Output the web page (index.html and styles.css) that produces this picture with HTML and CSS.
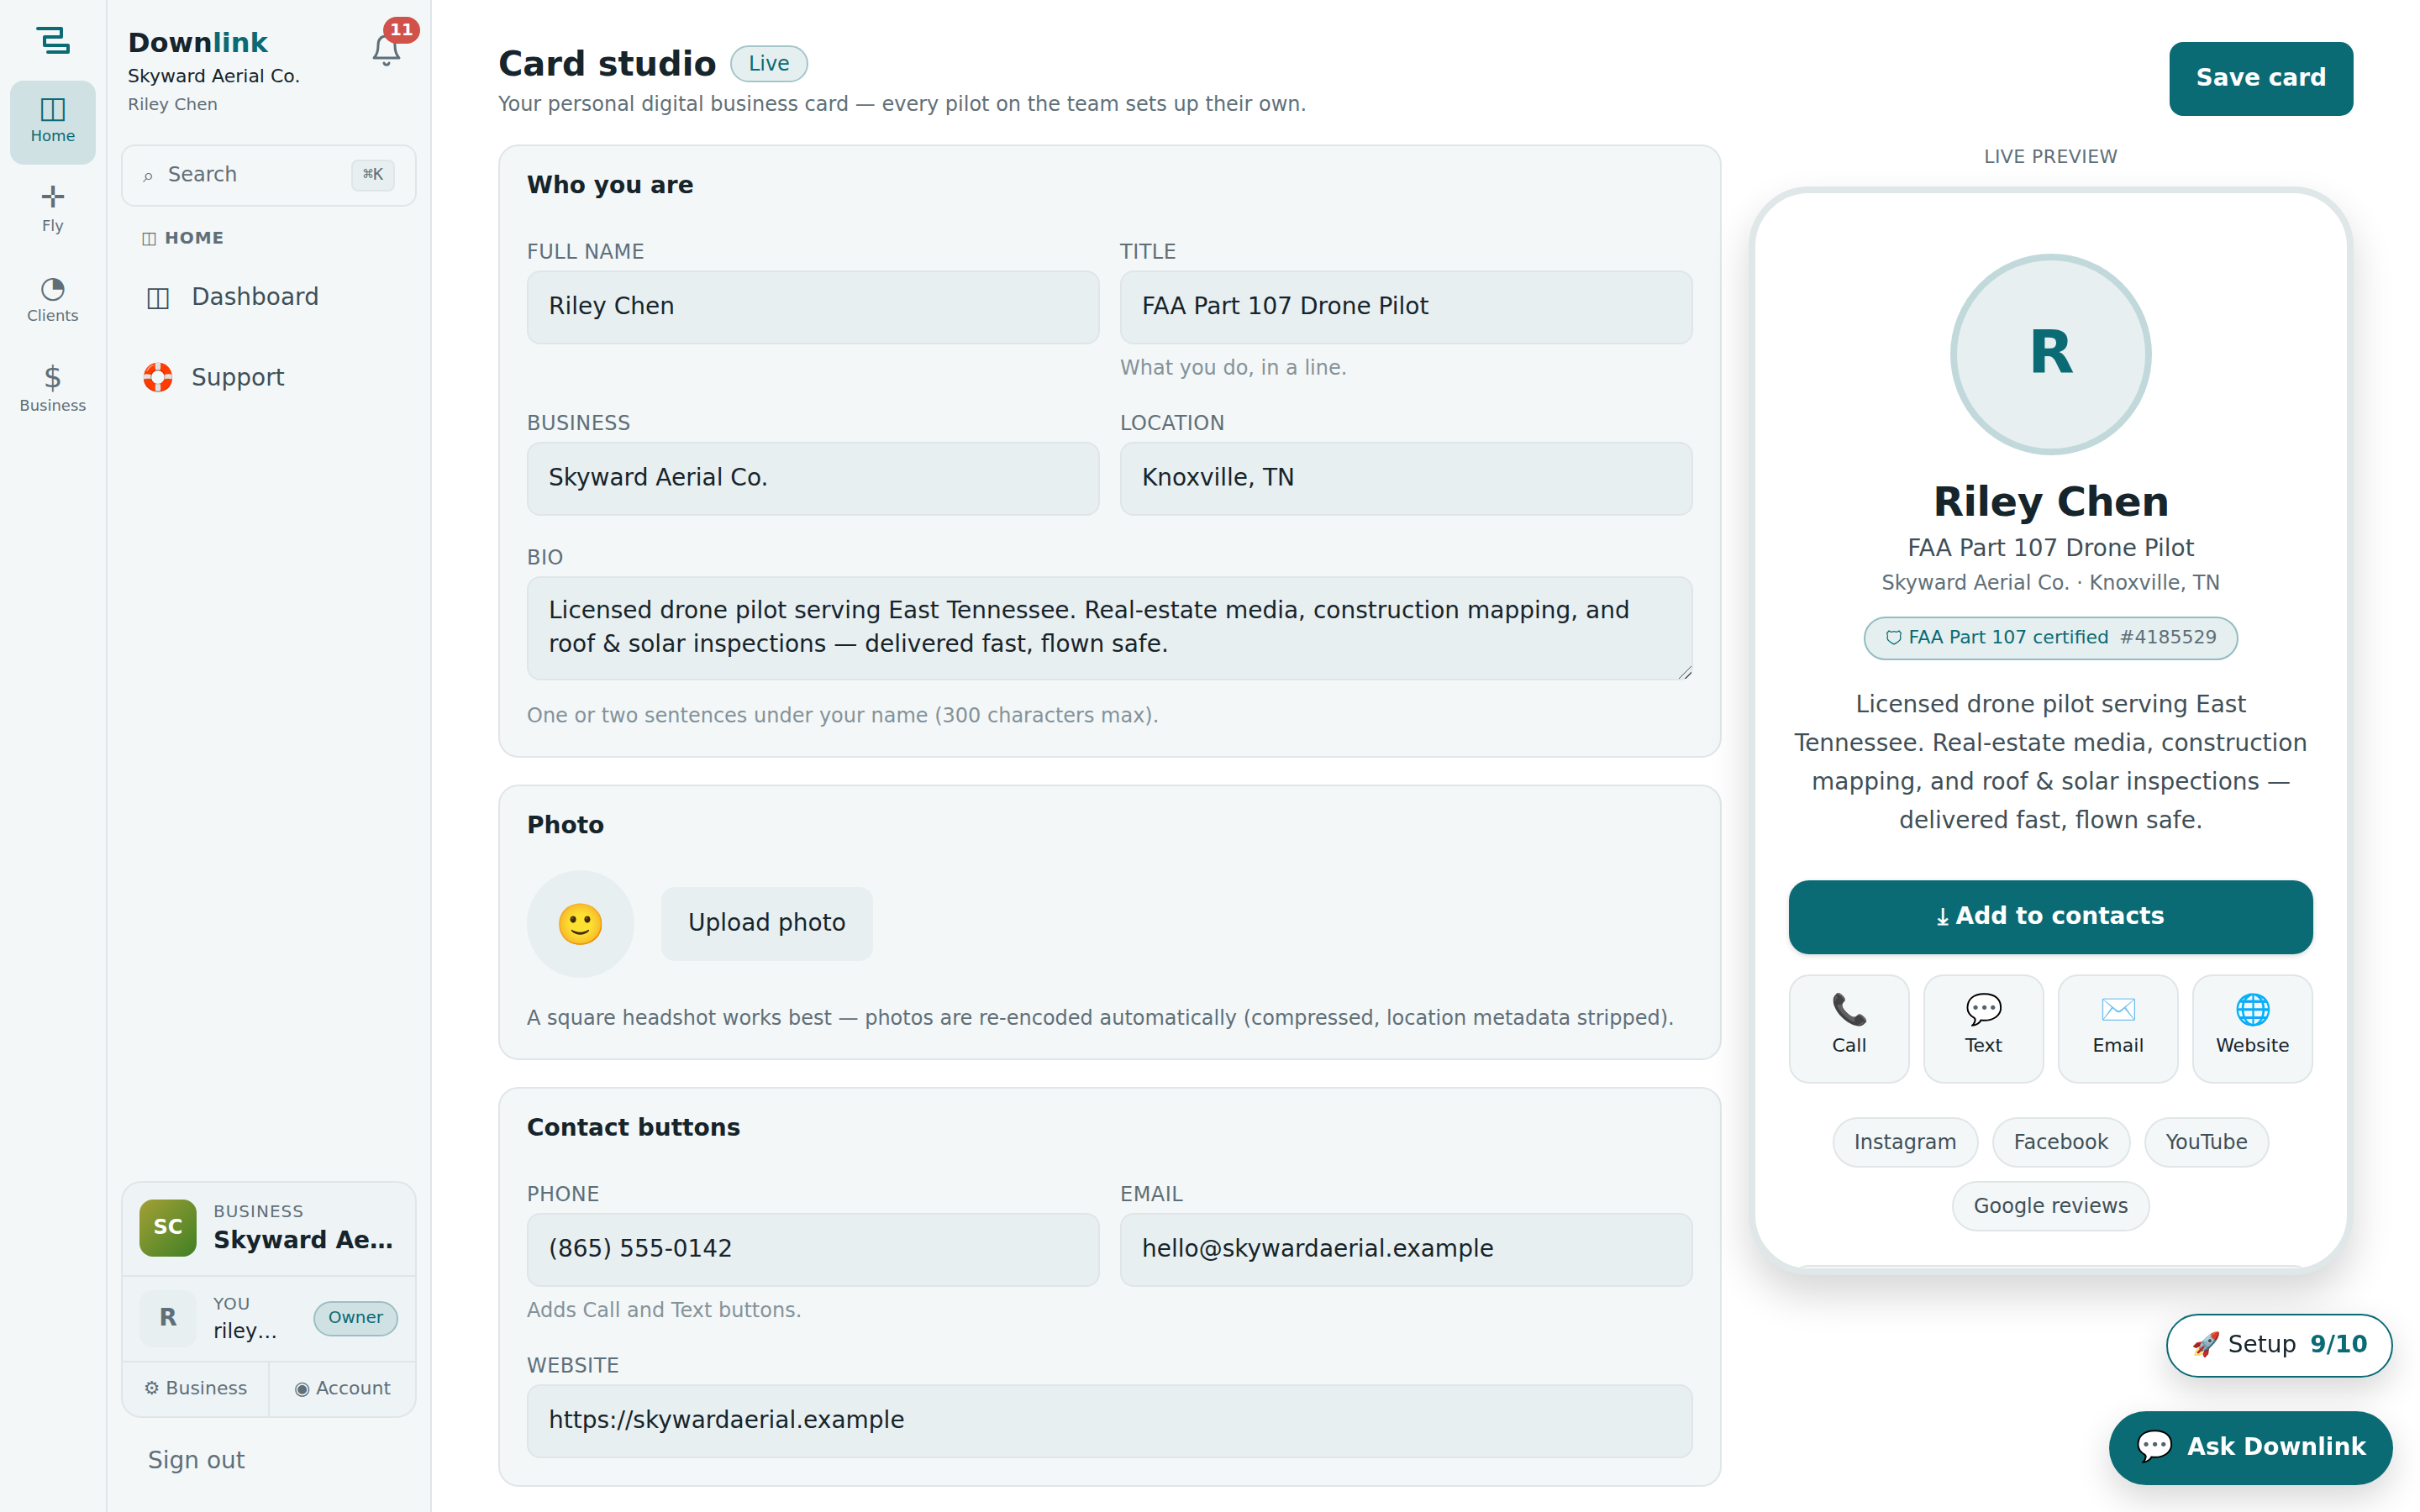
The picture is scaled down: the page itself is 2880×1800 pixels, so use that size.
FILE: index.html
```html
<!DOCTYPE html>
<html lang="en">
  <head>
    <meta charset="utf-8" />
    <meta name="viewport" content="width=device-width, initial-scale=1.0" />
    <title>Card studio - Downlink</title>
    <link rel="stylesheet" href="styles.css">
  </head>
  <body>
    <div class="app">
      <nav class="rail" aria-label="Sections">
        <a class="rail-logo" href="#" aria-label="Downlink">
          <svg width="40" height="32" viewBox="0 0 40 32" fill="none" stroke="currentColor" stroke-width="4" stroke-linecap="round" stroke-linejoin="round">
            <path d="M2 2h28v10H10v10h28v8H14" />
          </svg>
        </a>
        <a class="rail-item active" href="#"><span class="rail-icon">◫</span><span>Home</span></a>
        <a class="rail-item" href="#"><span class="rail-icon">✛</span><span>Fly</span></a>
        <a class="rail-item" href="#"><span class="rail-icon">◔</span><span>Clients</span></a>
        <a class="rail-item" href="#"><span class="rail-icon">$</span><span>Business</span></a>
      </nav>

      <aside class="sidebar">
        <div class="side-head">
          <div>
            <div class="brand">Down<span>link</span></div>
            <div class="org">Skyward Aerial Co.</div>
            <div class="user">Riley Chen</div>
          </div>
          <button class="bell" type="button" aria-label="Notifications">
            <svg width="44" height="44" viewBox="0 0 44 44" fill="none" stroke="currentColor" stroke-width="3" stroke-linecap="round" stroke-linejoin="round">
              <path d="M22 5c-7 0-10 4-10 11 0 8-2 12-5 15h30c-3-3-5-7-5-15 0-7-3-11-10-11z" />
              <path d="M19 37c1 3 5 3 6 0" />
            </svg>
            <span class="bell-count">11</span>
          </button>
        </div>

        <button class="search" type="button">
          <span class="search-icon">⌕</span>
          <span class="search-text">Search</span>
          <kbd>⌘K</kbd>
        </button>

        <div class="nav-title"><span class="nav-title-icon">◫</span> HOME</div>
        <nav class="side-nav">
          <a href="#"><span class="nav-icon">◫</span>Dashboard</a>
          <a href="#"><span class="nav-icon">🛟</span>Support</a>
        </nav>

        <div class="account">
          <div class="account-row">
            <div class="tile tile-org">SC</div>
            <div class="account-text">
              <div class="caps">BUSINESS</div>
              <div class="account-org">Skyward Aerial Co.</div>
            </div>
          </div>
          <div class="account-row account-you">
            <div class="tile">R</div>
            <div class="account-text">
              <div class="caps">YOU</div>
              <div class="account-user">riley@sky</div>
            </div>
            <span class="role">Owner</span>
          </div>
          <div class="account-links">
            <a href="#">⚙ Business</a>
            <a href="#">◉ Account</a>
          </div>
        </div>
        <a class="sign-out" href="#">Sign out</a>
      </aside>

      <main class="main">
        <header class="page-head">
          <div>
            <div class="title-row">
              <h1>Card studio</h1>
              <span class="live">Live</span>
            </div>
            <p class="sub">Your personal digital business card — every pilot on the team sets up their own.</p>
          </div>
          <button class="btn btn-primary" type="submit" form="card-form">Save card</button>
        </header>

        <div class="studio">
          <form class="cards" id="card-form">
            <section class="card">
              <h2>Who you are</h2>
              <div class="fields">
                <div class="field">
                  <label for="full-name">FULL NAME</label>
                  <input id="full-name" type="text" value="Riley Chen" />
                </div>
                <div class="field">
                  <label for="title">TITLE</label>
                  <input id="title" type="text" value="FAA Part 107 Drone Pilot" />
                  <p class="hint">What you do, in a line.</p>
                </div>
                <div class="field">
                  <label for="business">BUSINESS</label>
                  <input id="business" type="text" value="Skyward Aerial Co." />
                </div>
                <div class="field">
                  <label for="location">LOCATION</label>
                  <input id="location" type="text" value="Knoxville, TN" />
                </div>
                <div class="field wide">
                  <label for="bio">BIO</label>
                  <textarea id="bio" rows="2" maxlength="300">Licensed drone pilot serving East Tennessee. Real-estate media, construction mapping, and roof &amp; solar inspections — delivered fast, flown safe.</textarea>
                  <p class="hint">One or two sentences under your name (300 characters max).</p>
                </div>
              </div>
            </section>

            <section class="card">
              <h2>Photo</h2>
              <div class="photo-row">
                <div class="photo">🙂</div>
                <button class="btn" type="button">Upload photo</button>
              </div>
              <p class="note">A square headshot works best — photos are re-encoded automatically (compressed, location metadata stripped).</p>
            </section>

            <section class="card">
              <h2>Contact buttons</h2>
              <div class="fields">
                <div class="field">
                  <label for="phone">PHONE</label>
                  <input id="phone" type="tel" value="(865) 555-0142" />
                  <p class="hint">Adds Call and Text buttons.</p>
                </div>
                <div class="field">
                  <label for="email">EMAIL</label>
                  <input id="email" type="email" value="hello@skywardaerial.example" />
                </div>
                <div class="field wide">
                  <label for="website">WEBSITE</label>
                  <input id="website" type="url" value="https://skywardaerial.example" />
                </div>
              </div>
            </section>
          </form>

          <section class="preview">
            <div class="preview-label">LIVE PREVIEW</div>
            <div class="phone">
              <div class="avatar">R</div>
              <h3>Riley Chen</h3>
              <p class="p-title">FAA Part 107 Drone Pilot</p>
              <p class="p-org">Skyward Aerial Co. · Knoxville, TN</p>
              <div class="cert">
                <svg width="20" height="20" viewBox="0 0 20 20" fill="none" stroke="currentColor" stroke-width="1.2" stroke-linejoin="round">
                  <path d="M4 2c2 2 4 1.500 6 .5 2 1 4 1.500 6-.5l2.500 3c-1.500 2-1 4-.5 6-1 4-5 5-8 7-3-2-7-3-8-7 .5-2 1-4-.5-6z" />
                </svg>
                FAA Part 107 certified
                <span>#4185529</span>
              </div>
              <p class="p-bio">Licensed drone pilot serving East Tennessee. Real-estate media, construction mapping, and roof &amp; solar inspections — delivered fast, flown safe.</p>
              <button class="add" type="button">⤓ Add to contacts</button>
              <div class="actions">
                <a href="#"><span>📞</span>Call</a>
                <a href="#"><span>💬</span>Text</a>
                <a href="#"><span>✉️</span>Email</a>
                <a href="#"><span>🌐</span>Website</a>
              </div>
              <div class="chips">
                <a href="#">Instagram</a>
                <a href="#">Facebook</a>
                <a href="#">YouTube</a>
                <a href="#">Google reviews</a>
              </div>
              <div class="lead"></div>
            </div>
          </section>
        </div>
      </main>
    </div>

    <div class="floating">
      <button class="setup" type="button"><span>🚀 Setup</span> <b>9/10</b></button>
      <button class="ask" type="button"><span class="ask-icon">💬</span> Ask Downlink</button>
    </div>
  </body>
</html>
```
FILE: styles.css
```css
:root {
  --teal: #0b6b75;
  --ink: #16242b;
  --body: #3f4f57;
  --muted: #5f6f78;
  --faint: #849299;
  --line: #e0e6e8;
  --panel: #f3f7f8;
  --field: #e8eff1;
}

* { box-sizing: border-box; }

body {
  margin: 0;
  background: #fff;
  color: var(--ink);
  font-family: "DejaVu Sans", sans-serif;
  font-size: 28px;
}

h1, h2, h3, p { margin: 0; }
a { color: inherit; text-decoration: none; }
button, input, textarea { font: inherit; color: inherit; }
button { border: 0; background: none; padding: 0; cursor: pointer; }

.app {
  display: flex;
  align-items: flex-start;
  min-height: 100vh;
}

/* icon rail */
.rail {
  position: sticky;
  top: 0;
  flex: none;
  display: flex;
  flex-direction: column;
  gap: 7px;
  width: 128px;
  height: 100vh;
  padding: 32px 12px;
  background: var(--panel);
  border-right: 2px solid var(--line);
}

.rail-logo {
  display: flex;
  justify-content: center;
  height: 57px;
  color: var(--teal);
}

.rail-item {
  display: flex;
  flex-direction: column;
  align-items: center;
  height: 100px;
  padding-top: 12px;
  border-radius: 16px;
  color: var(--muted);
  font-size: 18px;
  line-height: 24px;
}

.rail-item.active { background: #d0e1e4; color: var(--teal); }

.rail-icon {
  height: 42px;
  font-size: 36px;
  line-height: 40px;
}

/* sidebar */
.sidebar {
  position: sticky;
  top: 0;
  flex: none;
  display: flex;
  flex-direction: column;
  width: 386px;
  height: 100vh;
  padding: 30px 16px 16px;
  background: var(--panel);
  border-right: 2px solid var(--line);
}

.side-head {
  display: flex;
  justify-content: space-between;
  align-items: flex-start;
  padding: 0 14px 0 8px;
}

.brand { font-size: 32px; font-weight: bold; line-height: 42px; }
.brand span { color: var(--teal); }
.org { font-size: 22px; line-height: 38px; }
.user { font-size: 20px; line-height: 28px; color: var(--muted); }

.bell {
  position: relative;
  width: 44px;
  height: 52px;
  padding-top: 8px;
  color: var(--muted);
}

.bell svg { display: block; }

.bell-count {
  position: absolute;
  top: -10px;
  right: -18px;
  min-width: 44px;
  height: 32px;
  border-radius: 16px;
  background: #d0524a;
  color: #fff;
  font-size: 20px;
  font-weight: bold;
  line-height: 30px;
  text-align: center;
}

.search {
  display: flex;
  align-items: center;
  height: 74px;
  margin-top: 34px;
  padding: 0 24px;
  border: 2px solid var(--line);
  border-radius: 16px;
  color: var(--muted);
  font-size: 24px;
}

.search-icon { width: 30px; text-align: left; }
.search-text { flex: 1; padding-bottom: 2px; text-align: left; }

kbd {
  height: 38px;
  padding: 0 12px;
  border: 2px solid var(--line);
  border-radius: 8px;
  background: var(--field);
  font-family: "DejaVu Sans Mono", monospace;
  font-size: 20px;
  line-height: 30px;
}

.nav-title {
  display: flex;
  gap: 8px;
  margin: 21px 0 10px;
  padding-left: 24px;
  color: var(--muted);
  font-size: 20px;
  font-weight: bold;
  line-height: 32px;
  letter-spacing: 1px;
}

.nav-title-icon { font-weight: normal; }

.side-nav { display: flex; flex-direction: column; gap: 8px; }

.side-nav a {
  display: flex;
  align-items: center;
  gap: 20px;
  height: 88px;
  padding-left: 24px;
  color: var(--body);
}

.nav-icon {
  display: flex;
  justify-content: center;
  width: 40px;
  font-size: 32px;
}

.account {
  margin-top: auto;
  border: 2px solid var(--line);
  border-radius: 24px;
  background: #eef4f6;
}

.account-row {
  display: flex;
  align-items: center;
  gap: 20px;
  padding: 19px 20px 21px;
  border-bottom: 2px solid var(--line);
}

.account-you { padding: 16px 20px; }

.tile {
  flex: none;
  width: 68px;
  height: 68px;
  border-radius: 16px;
  background: var(--field);
  color: var(--muted);
  font-weight: bold;
  line-height: 66px;
  text-align: center;
}

.tile-org {
  background: linear-gradient(135deg, #a3a035, #3f8025);
  color: #fff;
  font-size: 24px;
}

.account-text { flex: 1; min-width: 0; }
.caps { color: var(--muted); font-size: 20px; line-height: 30px; letter-spacing: 1px; }

.account-org, .account-user {
  overflow: hidden;
  text-overflow: ellipsis;
  white-space: nowrap;
}

.account-org { font-weight: bold; line-height: 40px; }
.account-user { font-size: 24px; line-height: 36px; }

.role {
  height: 42px;
  padding: 0 16px;
  border: 2px solid #9cbfc3;
  border-radius: 21px;
  background: #d0e1e4;
  color: var(--teal);
  font-size: 20px;
  line-height: 35px;
}

.account-links { display: flex; height: 64px; }

.account-links a {
  flex: 1;
  color: var(--muted);
  font-size: 22px;
  line-height: 62px;
  text-align: center;
}

.account-links a + a { border-left: 2px solid var(--line); }

.sign-out {
  height: 88px;
  margin-top: 8px;
  padding-left: 32px;
  color: var(--muted);
  line-height: 86px;
}

/* page */
.main {
  flex: 1;
  min-width: 0;
  padding: 50px 79px 30px;
}

.page-head {
  display: flex;
  justify-content: space-between;
  align-items: flex-start;
  margin-bottom: 32px;
}

.title-row {
  display: flex;
  align-items: center;
  gap: 16px;
  padding-top: 2px;
}

h1 { font-size: 40px; line-height: 48px; }

.live {
  height: 44px;
  padding: 0 20px;
  border: 2px solid #a3c6c9;
  border-radius: 22px;
  background: #e5eff0;
  color: var(--teal);
  font-size: 24px;
  line-height: 40px;
}

.sub { margin-top: 8px; color: var(--muted); font-size: 24px; line-height: 32px; }

.btn {
  height: 88px;
  padding: 0 32px 3px;
  border-radius: 16px;
  background: var(--field);
}

.btn-primary { background: var(--teal); color: #fff; font-weight: bold; }

.studio {
  display: grid;
  grid-template-columns: minmax(0, 1fr) 720px;
  gap: 32px;
  align-items: start;
}

.cards { display: flex; flex-direction: column; gap: 32px; }

.card {
  padding: 32px;
  border: 2px solid var(--line);
  border-radius: 24px;
  background: var(--panel);
}

h2 { font-size: 28px; line-height: 30px; }

.fields {
  display: grid;
  grid-template-columns: 1fr 1fr;
  gap: 32px 24px;
  margin-top: 46px;
}

.wide { grid-column: 1 / -1; }

.field label {
  display: block;
  margin-bottom: 4px;
  color: var(--muted);
  font-size: 24px;
  line-height: 36px;
  letter-spacing: 0.02em;
}

.field input, .field textarea {
  display: block;
  width: 100%;
  height: 88px;
  padding: 0 24px 4px;
  border: 2px solid var(--line);
  border-radius: 16px;
  background: var(--field);
}

.field textarea {
  height: 124px;
  margin-bottom: 26px;
  padding: 19px 24px;
  line-height: 40px;
  resize: vertical;
}

/* two-stroke grip */
.field textarea::-webkit-resizer {
  background: linear-gradient(135deg, transparent 47%, #555 47% 52%, transparent 52% 72%, #555 72% 77%, transparent 77%);
}

.hint { margin-top: 12px; color: var(--faint); font-size: 24px; line-height: 32px; }

.photo-row {
  display: flex;
  align-items: center;
  gap: 32px;
  margin: 38px 0 32px;
}

.photo {
  width: 128px;
  height: 128px;
  border-radius: 50%;
  background: var(--field);
  font-size: 48px;
  line-height: 128px;
  text-align: center;
}

.note { color: var(--muted); font-size: 24px; line-height: 32px; }

/* live preview */
.preview-label {
  margin-bottom: 20px;
  color: var(--muted);
  font-size: 22px;
  line-height: 30px;
  letter-spacing: 0.02em;
  text-align: center;
}

.phone {
  display: flex;
  flex-direction: column;
  align-items: center;
  height: 72vh;
  padding: 72px 40px 0;
  overflow: hidden;
  border: 8px solid #e0e7e9;
  border-radius: 72px;
  background: #fff;
  box-shadow: 0 24px 48px rgba(0, 0, 0, 0.16);
  text-align: center;
}

.phone > * { flex: none; }

.avatar {
  width: 240px;
  height: 240px;
  border: 8px solid #c2d9dc;
  border-radius: 50%;
  background: var(--field);
  color: var(--teal);
  font-size: 72px;
  font-weight: bold;
  line-height: 218px;
}

h3 { margin-top: 28px; font-size: 48px; line-height: 54px; letter-spacing: -0.01em; }
.p-title { margin-top: 10px; color: var(--body); line-height: 38px; }
.p-org { margin-top: 6px; color: var(--muted); font-size: 24px; line-height: 32px; }

.cert {
  display: flex;
  align-items: center;
  gap: 8px;
  height: 52px;
  margin-top: 24px;
  padding: 0 24px 3px;
  border: 2px solid #93bdc1;
  border-radius: 26px;
  background: #e5eff0;
  color: var(--teal);
  font-size: 22px;
}

.cert span { margin-left: 4px; color: var(--muted); }

.p-bio { margin-top: 30px; color: var(--body); line-height: 46px; }

.add {
  width: 100%;
  height: 88px;
  margin-top: 48px;
  padding-bottom: 3px;
  border-radius: 24px;
  background: var(--teal);
  box-shadow: 0 2px 6px rgba(0, 0, 0, 0.15);
  color: #fff;
  font-weight: bold;
}

.actions {
  display: grid;
  grid-template-columns: repeat(4, 1fr);
  gap: 16px;
  width: 100%;
  margin-top: 24px;
}

.actions a {
  display: flex;
  flex-direction: column;
  height: 130px;
  padding-top: 18px;
  border: 2px solid var(--line);
  border-radius: 24px;
  background: var(--panel);
  font-size: 22px;
  line-height: 34px;
}

.actions span { height: 48px; font-size: 36px; line-height: 44px; }

.chips {
  display: flex;
  flex-wrap: wrap;
  justify-content: center;
  gap: 16px;
  margin-top: 40px;
}

.chips a {
  height: 60px;
  padding: 0 24px;
  border: 2px solid var(--line);
  border-radius: 30px;
  background: var(--panel);
  color: var(--body);
  font-size: 24px;
  line-height: 56px;
}

.lead {
  width: 100%;
  height: 240px;
  margin-top: 40px;
  border: 2px solid var(--line);
  border-radius: 24px;
  background: var(--panel);
}

/* floating buttons */
.floating {
  position: fixed;
  right: 32px;
  bottom: 32px;
  display: flex;
  flex-direction: column;
  align-items: flex-end;
  gap: 40px;
}

.setup, .ask {
  display: flex;
  align-items: center;
  gap: 16px;
  border-radius: 44px;
  box-shadow: 0 16px 40px rgba(0, 0, 0, 0.16);
}

.setup { height: 76px; padding: 0 28px 4px; border: 2px solid var(--teal); background: #fff; }
.setup b { color: var(--teal); }
.ask { height: 88px; padding: 0 32px 4px; background: var(--teal); color: #fff; font-weight: bold; }
.ask-icon { font-size: 36px; line-height: 44px; }
```
